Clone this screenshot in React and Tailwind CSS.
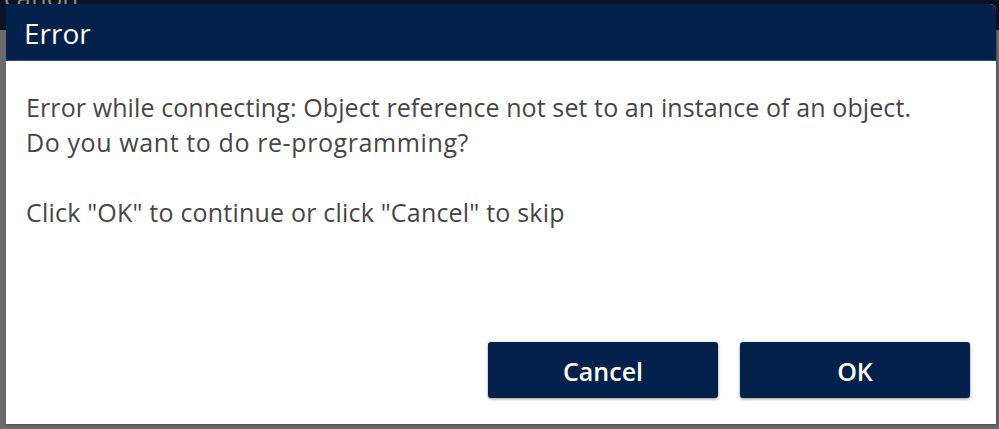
export default function App() {
  return (
    <div className="relative w-[999px] h-[429px] bg-[#6b6b6b] overflow-hidden" style={{ fontFamily: '"Open Sans", "Noto Sans", sans-serif' }}>
      <div className="absolute left-0 top-0 w-full h-[30px] bg-[#0b1424]">
        <span className="absolute left-[4px] top-[-22px] text-[26px] text-[#8a8a8a]">cation</span>
      </div>
      <div className="absolute left-[6px] top-[4px] w-[990px] h-[420px] bg-white rounded-tr-[6px] flex flex-col shadow-[1px_1px_2px_rgba(0,0,0,0.3)]">
        <div className="h-[57px] bg-[#03214a] rounded-tr-[6px] flex items-center pl-[18px] pt-[2px] border-b border-[#2a4a78]">
          <span className="text-white text-[28px] leading-none">Error</span>
        </div>
        <div className="flex-1 flex flex-col px-[20px] pt-[29px]">
          <div className="text-[#464646] text-[25px] tracking-[0.1px] leading-[35px]">
            <p>Error while connecting: Object reference not set to an instance of an object.</p>
            <p className="tracking-[0.6px]">Do you want to do re-programming?</p>
            <p>&nbsp;</p>
            <p className="tracking-[0.2px]">Click "OK" to continue or click "Cancel" to skip</p>
          </div>
          <div className="mt-auto mb-[26px] flex justify-end gap-[22px] pr-[6px]">
            <button className="w-[230px] h-[56px] pt-[3px] bg-[#03214a] rounded-[3px] text-white text-[25px] font-semibold shadow-[0_1px_3px_rgba(0,0,0,0.45)]">Cancel</button>
            <button className="w-[230px] h-[56px] pt-[3px] bg-[#03214a] rounded-[3px] text-white text-[25px] font-semibold shadow-[0_1px_3px_rgba(0,0,0,0.45)]">OK</button>
          </div>
        </div>
      </div>
    </div>
  );
}
